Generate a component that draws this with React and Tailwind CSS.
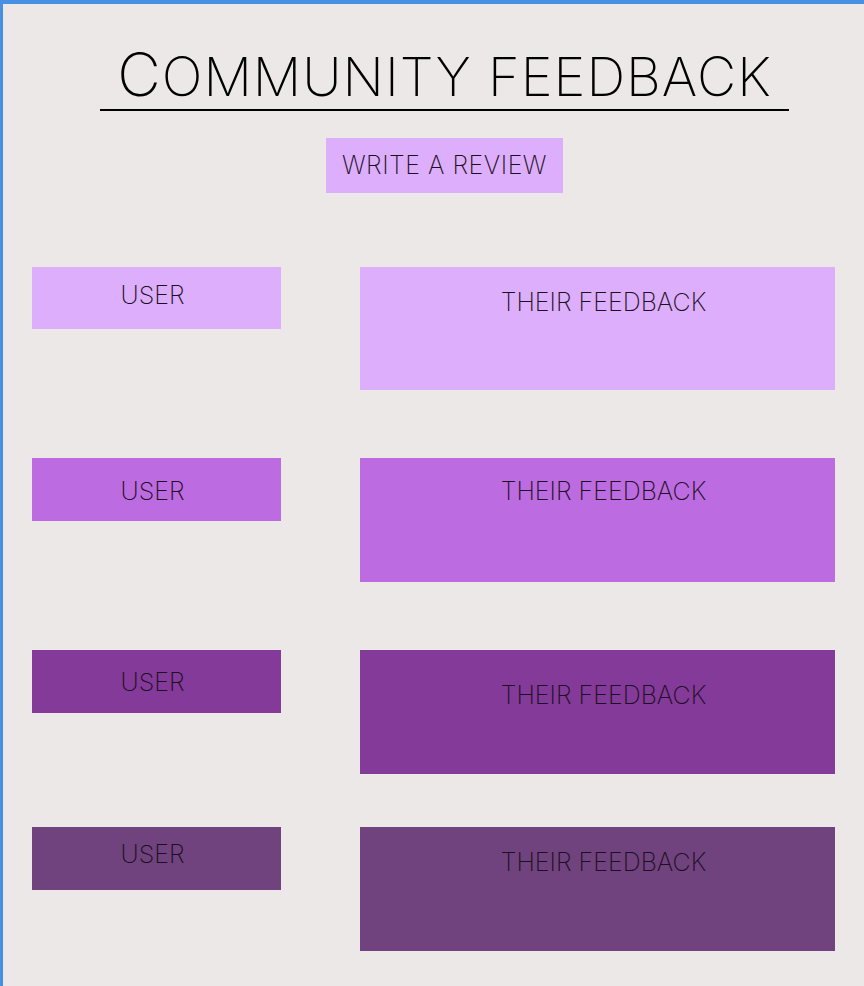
import React from "react";

const font = { fontFamily: "Inter, 'Noto Sans', sans-serif" };

function Row({ bg, mt, userPt, fbPt, userH, fbH }) {
  return (
    <div className={`flex ${mt}`}>
      <div className={`ml-[29px] w-[249px] ${userH} ${bg} ${userPt} flex justify-center`}>
        <span className="pr-[8px] text-[25px] leading-none font-extralight whitespace-nowrap text-[#1c0f22]">USER</span>
      </div>
      <div className={`ml-[79px] w-[475px] ${fbH} ${bg} ${fbPt} flex justify-center`}>
        <span className="pl-[12px] text-[25px] leading-none font-extralight whitespace-nowrap text-[#1c0f22]">THEIR FEEDBACK</span>
      </div>
    </div>
  );
}

export default function App() {
  return (
    <div
      className="w-[864px] h-[986px] overflow-hidden bg-[#ece8e7] border-l-[3px] border-t-[4px] border-[#4a90e2]"
      style={font}
    >
      <div className="ml-[97px] w-[689px] flex flex-col items-center">
        <div className="w-full border-b-2 border-black pt-[40px] pb-[5px] flex justify-center items-baseline text-black font-extralight leading-none whitespace-nowrap">
          <span className="text-[60px] tracking-[1px]">C</span>
          <span className="text-[54px] tracking-[1px]">OMMUNITY FEEDBACK</span>
        </div>
        <div className="mt-[27px] w-[237px] h-[55px] bg-[#dcaefc] flex items-center justify-center">
          <span className="text-[25px] leading-none font-extralight tracking-[0.5px] whitespace-nowrap text-[#1c0f22]">WRITE A REVIEW</span>
        </div>
      </div>
      <Row bg="bg-[#dcaefc]" mt="mt-[74px]" userH="h-[62px]" fbH="h-[123px]" userPt="pt-[16px]" fbPt="pt-[23px]" />
      <Row bg="bg-[#bd6be0]" mt="mt-[68px]" userH="h-[63px]" fbH="h-[124px]" userPt="pt-[21px]" fbPt="pt-[21px]" />
      <Row bg="bg-[#843a98]" mt="mt-[68px]" userH="h-[63px]" fbH="h-[124px]" userPt="pt-[20px]" fbPt="pt-[33px]" />
      <Row bg="bg-[#70437e]" mt="mt-[53px]" userH="h-[63px]" fbH="h-[124px]" userPt="pt-[15px]" fbPt="pt-[23px]" />
    </div>
  );
}
